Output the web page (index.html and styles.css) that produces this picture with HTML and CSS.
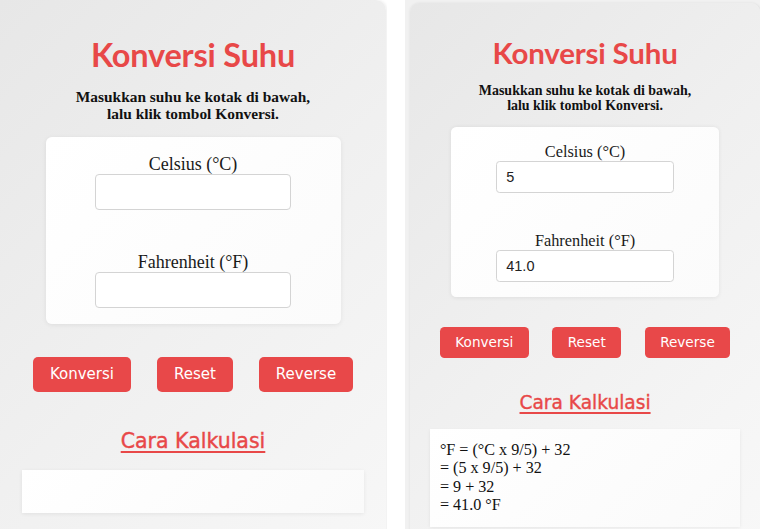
FILE: index.html
```html
<!DOCTYPE html>
<html lang="id">
<head>
<meta charset="utf-8">
<title>Konversi Suhu</title>
<link rel="stylesheet" href="styles.css">
</head>
<body>
<div class="stage">
  <div class="shot shot-left">
    <div class="card">
      <h1 class="title">Konversi Suhu</h1>
      <p class="intro">Masukkan suhu ke kotak di bawah,<br>lalu klik tombol Konversi.</p>
      <div class="form-box">
        <label class="field-label">Celsius (°C)</label>
        <input class="field-input" type="text" value="">
        <label class="field-label second">Fahrenheit (°F)</label>
        <input class="field-input" type="text" value="">
      </div>
      <div class="buttons">
        <button class="btn">Konversi</button>
        <button class="btn">Reset</button>
        <button class="btn">Reverse</button>
      </div>
      <h2 class="calc-title">Cara Kalkulasi</h2>
      <div class="result empty"></div>
    </div>
  </div>
  <div class="divider"></div>
  <div class="shot shot-right">
    <div class="card scaled">
      <h1 class="title">Konversi Suhu</h1>
      <p class="intro">Masukkan suhu ke kotak di bawah,<br>lalu klik tombol Konversi.</p>
      <div class="form-box">
        <label class="field-label">Celsius (°C)</label>
        <input class="field-input" type="text" value="5">
        <label class="field-label second">Fahrenheit (°F)</label>
        <input class="field-input" type="text" value="41.0">
      </div>
      <div class="buttons">
        <button class="btn">Konversi</button>
        <button class="btn">Reset</button>
        <button class="btn">Reverse</button>
      </div>
      <h2 class="calc-title">Cara Kalkulasi</h2>
      <div class="result">
        <div>°F = (°C x 9/5) + 32</div>
        <div>= (5 x 9/5) + 32</div>
        <div>= 9 + 32</div>
        <div>= 41.0 °F</div>
      </div>
    </div>
  </div>
</div>
</body>
</html>
```

FILE: styles.css
```css
html, body {
  margin: 0;
  padding: 0;
  background: #ffffff;
  overflow: hidden;
}

.stage {
  display: flex;
  width: 760px;
  height: 529px;
  overflow: hidden;
}

.shot {
  height: 529px;
  overflow: hidden;
}

.shot-left {
  width: 387px;
  flex: none;
}

.divider {
  width: 18px;
  flex: none;
  background: #ffffff;
}

.shot-right {
  flex: 1;
  background: #f1f1f1;
  padding: 3px 0 0 5px;
}

.card {
  width: 386px;
  height: 600px;
  box-sizing: border-box;
  background: linear-gradient(135deg, #e7e7e7 0%, #f0f0f0 50%, #f8f8f8 100%);
  border-radius: 0 10px 0 0;
  box-shadow: 1px 0 3px rgba(0, 0, 0, 0.08);
  padding: 0 22px 0 22px;
  display: flex;
  flex-direction: column;
  align-items: center;
}

.card.scaled {
  zoom: 0.907;
  border-radius: 10px 10px 0 0;
}

.title {
  margin: 35px 0 0 0;
  font-family: Lato, "Open Sans", sans-serif;
  font-weight: 700;
  font-size: 32.5px;
  line-height: 40px;
  color: #e84848;
  letter-spacing: -0.2px;
}

.intro {
  margin: 14px 0 0 0;
  font-family: "Liberation Serif", serif;
  font-weight: 700;
  font-size: 15.4px;
  line-height: 16.5px;
  color: #111111;
  text-align: center;
}

.form-box {
  margin-top: 15px;
  width: 295px;
  box-sizing: border-box;
  padding: 17px 0 16px 0;
  background: linear-gradient(135deg, #ffffff 0%, #fbfbfb 100%);
  border-radius: 6px;
  box-shadow: 0 1px 5px rgba(0, 0, 0, 0.07);
  display: flex;
  flex-direction: column;
  align-items: center;
}

.field-label {
  font-family: "Liberation Serif", serif;
  font-size: 18px;
  line-height: 20px;
  height: 20px;
  color: #1a1a1a;
}

.field-label.second {
  margin-top: 42px;
}

.field-input {
  width: 196px;
  height: 36px;
  box-sizing: border-box;
  border: 1px solid #d4d4d4;
  border-radius: 4px;
  background: #ffffff;
  padding: 0 10px;
  font-family: "Liberation Sans", Arial, sans-serif;
  font-size: 16px;
  color: #222222;
  outline: none;
}

.buttons {
  margin-top: 33px;
  display: flex;
  gap: 26px;
  justify-content: center;
}

.btn {
  height: 35px;
  padding: 0 17px;
  border: none;
  border-radius: 5px;
  background: #e84849;
  color: #ffffff;
  font-family: "DejaVu Sans", Verdana, sans-serif;
  font-size: 15px;
  line-height: 35px;
}

.calc-title {
  margin: 35px 0 0 0;
  font-family: "DejaVu Sans", Verdana, sans-serif;
  font-weight: 400;
  font-size: 20.5px;
  line-height: 28px;
  color: #e84848;
  text-decoration: underline;
  text-decoration-thickness: 2px;
  text-underline-offset: 3px;
  -webkit-text-stroke: 0.4px #e84848;
}

.result {
  margin-top: 15px;
  align-self: stretch;
  box-sizing: border-box;
  padding: 13px 11px 14px 11px;
  background: linear-gradient(135deg, #ffffff 0%, #fafafa 100%);
  box-shadow: 0 1px 4px rgba(0, 0, 0, 0.07);
  font-family: "Liberation Serif", serif;
  font-size: 17.8px;
  line-height: 20.3px;
  color: #111111;
}

.result.empty {
  height: 43px;
}
```
